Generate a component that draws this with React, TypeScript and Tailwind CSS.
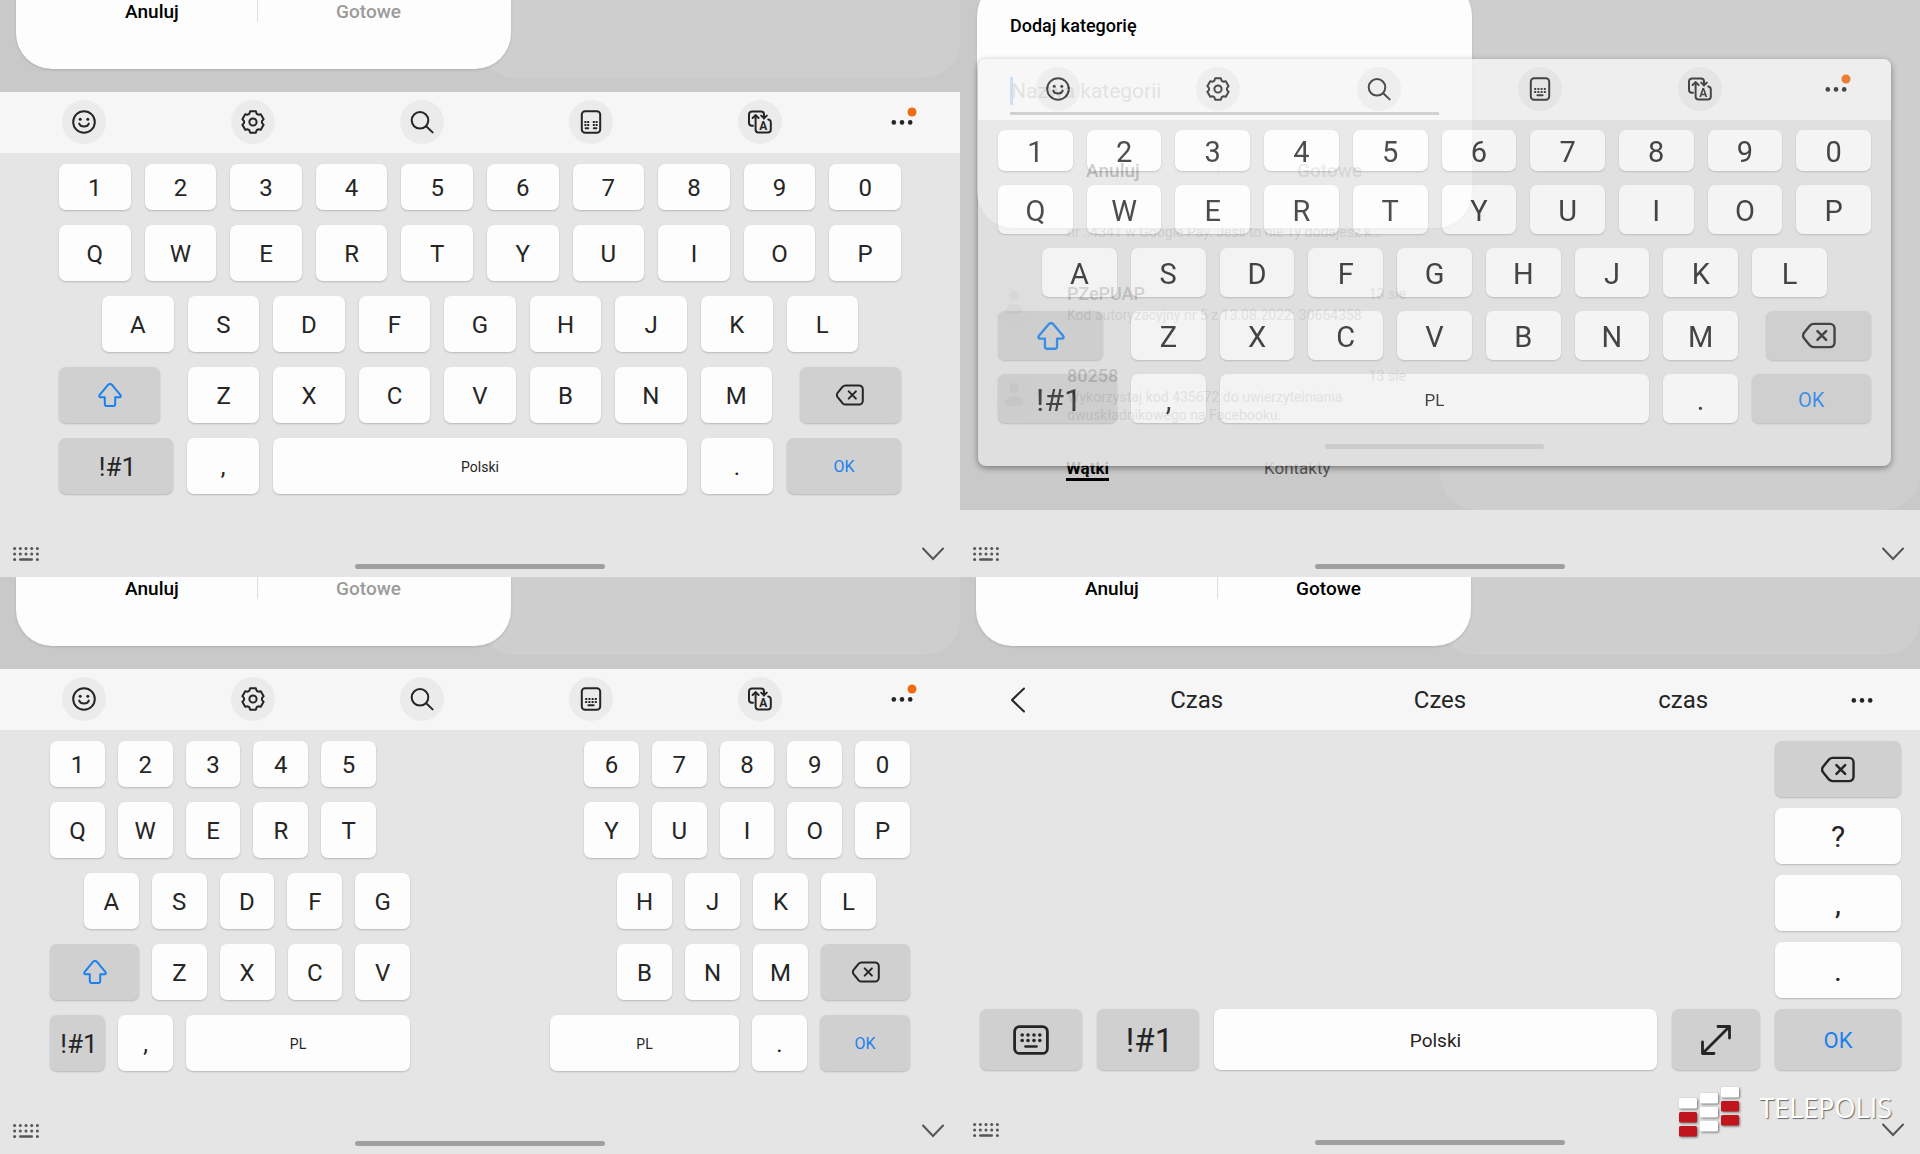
import type { ReactNode } from "react";
import clsx from "clsx";

const GEAR_POINTS = Array.from({ length: 6 })
  .flatMap((_, i) =>
    [
      [-24, 9],
      [-15, 11],
      [15, 11],
      [24, 9],
    ].map(([offset, radius]) => {
      const angle = ((i * 60 - 90 + offset) * Math.PI) / 180;
      return `${(radius * Math.cos(angle)).toFixed(2)},${(radius * Math.sin(angle)).toFixed(2)}`;
    })
  )
  .join(" ");

const ToolIcon = ({ children }: { children: ReactNode }) => (
  <svg
    viewBox="-12 -12 24 24"
    className="w-6 h-6"
    fill="none"
    stroke="currentColor"
    strokeWidth="2"
    strokeLinecap="round"
    strokeLinejoin="round"
  >
    {children}
  </svg>
);

const SmileIcon = () => (
  <ToolIcon>
    <circle r="10.8" />
    <circle cx="-3.8" cy="-2.8" r="1.5" fill="currentColor" stroke="none" />
    <circle cx="3.8" cy="-2.8" r="1.5" fill="currentColor" stroke="none" />
    <path d="M-4.8 1.6A5 4 0 0 0 4.8 1.6" />
  </ToolIcon>
);

const GearIcon = () => (
  <ToolIcon>
    <polygon points={GEAR_POINTS} />
    <circle r="3.6" />
  </ToolIcon>
);

const SearchIcon = () => (
  <ToolIcon>
    <circle cx="-2" cy="-1.7" r="8.3" />
    <path d="M4.2 4.2L10.6 10.4" />
  </ToolIcon>
);

const ModeIcon = ({ split }: { split?: boolean }) => {
  const columns = split ? [-5.6, -2.8, 2.8, 5.6] : [-4.8, -1.6, 1.6, 4.8];
  return (
    <ToolIcon>
      <rect x="-9.2" y="-10.8" width="18.4" height="21.6" rx="3.4" />
      {columns.map((x) => (
        <g key={x} fill="currentColor" stroke="none">
          <rect x={x - 1} y="-1" width="2" height="2" />
          <rect x={x - 1} y="2" width="2" height="2" />
        </g>
      ))}
      {split ? <path d="M-5.4 6.2H-2.8M2.8 6.2H5.4" /> : <path d="M-2.6 6.2H2.6" />}
    </ToolIcon>
  );
};

const TranslateIcon = () => (
  <ToolIcon>
    <path d="M-7 3.8H-8a3 3 0 0 1-3-3V-7.6a3 3 0 0 1 3-3H1a3 3 0 0 1 3 3V-3.6" />
    <path d="M-4.4-6.6V7.6a3 3 0 0 0 3 3H7.8a3 3 0 0 0 3-3V.4a3 3 0 0 0-2.6-3" />
    <path d="M-7.4-4L-4.4-6.9L-1.4-4" />
    <path d="M1.2-6.4L4-3.6L6.8-6.4" />
    <text
      x="3.2"
      y="8"
      textAnchor="middle"
      fontSize="12"
      fontWeight="700"
      fill="currentColor"
      stroke="none"
    >
      A
    </text>
  </ToolIcon>
);

const DotsIcon = ({ badge }: { badge?: boolean }) => (
  <svg viewBox="-12 -12 24 24" className="w-6 h-6 overflow-visible" fill="currentColor">
    <circle cx="-8.2" cy="0.4" r="2.3" />
    <circle cx="0" cy="0.4" r="2.3" />
    <circle cx="8.2" cy="0.4" r="2.3" />
    {badge && <circle cx="10" cy="-10" r="4.5" fill="#f26a12" />}
  </svg>
);

const BackspaceIcon = ({ className }: { className: string }) => (
  <svg
    viewBox="-14 -11 28 22"
    className={className}
    fill="none"
    stroke="currentColor"
    strokeWidth="2"
    strokeLinecap="round"
    strokeLinejoin="round"
  >
    <path d="M-4.4-9.6H9a3.8 3.8 0 0 1 3.8 3.8V5.8A3.8 3.8 0 0 1 9 9.6H-4.4a4 4 0 0 1-2.9-1.2L-12 2.6a3.6 3.6 0 0 1 0-5.2L-7.3-8.4a4 4 0 0 1 2.9-1.2z" />
    <path d="M-1.3-3.6L5.9 3.6M5.9-3.6L-1.3 3.6" />
  </svg>
);

const ShiftIcon = ({ className }: { className: string }) => (
  <svg
    viewBox="-12 -12 24 24"
    className={className}
    fill="none"
    stroke="currentColor"
    strokeWidth="2"
    strokeLinejoin="round"
  >
    <path d="M-1.8-10.3a2.4 2.4 0 0 1 3.6 0L10.3-.2c1 1.3.4 2.4-.9 2.4H5.200V9.3a1.6 1.6 0 0 1-1.6 1.6H-3.6A1.6 1.6 0 0 1-5.200 9.3V2.2H-9.4c-1.3 0-1.9-1.1-.9-2.4z" />
  </svg>
);

const KeyboardIcon = () => (
  <svg
    viewBox="0 0 36 30"
    className="w-9 h-[30px]"
    fill="none"
    stroke="currentColor"
    strokeWidth="2.8"
    strokeLinecap="round"
  >
    <rect x="1.6" y="1.6" width="32.8" height="26.8" rx="5" />
    {[9.2, 15, 21, 26.8].map((x) => (
      <g key={x} fill="currentColor" stroke="none">
        <circle cx={x} cy="10" r="1.8" />
        <circle cx={x} cy="15.5" r="1.8" />
      </g>
    ))}
    <path d="M12.5 21.5H23.5" strokeWidth="2.6" />
  </svg>
);

const ExpandIcon = () => (
  <svg
    viewBox="0 0 32 32"
    className="w-8 h-8"
    fill="none"
    stroke="currentColor"
    strokeWidth="2.8"
    strokeLinecap="round"
    strokeLinejoin="round"
  >
    <path d="M2.5 29.5L29.5 2.5M18 2.5H29.5V14M2.5 18V29.5H14" />
  </svg>
);

const AnswerButtons = ({ ready }: { ready?: boolean }) => (
  <div className="flex flex-row pl-[31px] pr-8 text-[19px] leading-6 font-medium">
    <button className="w-[210px] text-black">Anuluj</button>
    <div className="w-px h-[22px] bg-[#dedede]"></div>
    <button className={clsx("flex-1", ready ? "text-black" : "text-[#9b9b9b]")}>
      Gotowe
    </button>
  </div>
);

// Bottom edge of the dialog that stays visible above the docked keyboard
const DialogEdge = ({ ready }: { ready?: boolean }) => (
  <div className="relative h-[92px] bg-[#c9c9c9] overflow-hidden">
    <div className="absolute top-0 right-0 w-1/2 h-[78px] bg-[#cecece] rounded-b-[36px]"></div>
    <div className="relative w-[495px] h-[69px] ml-4 bg-[#fdfdfd] rounded-b-[36px] shadow-sm">
      <AnswerButtons ready={ready} />
    </div>
  </div>
);

const ToolButton = ({ label, children }: { label: string; children: ReactNode }) => (
  <button
    aria-label={label}
    className="flex justify-center items-center justify-self-center w-11 h-11 rounded-full bg-[#ebebeb]"
  >
    {children}
  </button>
);

const Toolbar = ({ split }: { split?: boolean }) => (
  <div className="grid grid-cols-[168fr_169fr_169fr_169fr_169fr_116fr] items-center h-[61px] pb-px bg-[#f6f6f6]">
    <ToolButton label="Emotikony">
      <SmileIcon />
    </ToolButton>
    <ToolButton label="Ustawienia">
      <GearIcon />
    </ToolButton>
    <ToolButton label="Szukaj">
      <SearchIcon />
    </ToolButton>
    <ToolButton label="Tryb klawiatury">
      <ModeIcon split={split} />
    </ToolButton>
    <ToolButton label="Tłumacz">
      <TranslateIcon />
    </ToolButton>
    <button aria-label="Więcej" className="justify-self-center">
      <DotsIcon badge />
    </button>
  </div>
);

type KeyProps = {
  children: ReactNode;
  className?: string;
  dark?: boolean;
  label?: string;
};

const Key = ({ children, className = "flex-1", dark, label }: KeyProps) => (
  <button
    aria-label={label}
    className={clsx(
      "flex justify-center items-center min-w-0 rounded-[7px] shadow-[0_1px_2px_rgba(0,0,0,0.2)]",
      typeof children === "string" && "pt-[2px]",
      dark ? "bg-[#d0d0d0]" : "bg-[#fdfdfd]",
      className
    )}
  >
    {children}
  </button>
);

const Keys = ({ chars }: { chars: string }) => (
  <>
    {chars.split("").map((char) => (
      <Key key={char}>{char}</Key>
    ))}
  </>
);

const NavBar = () => (
  <div className="grid grid-cols-[1fr_250px_1fr] items-end h-[67px] text-[#555]">
    <button aria-label="Wybierz klawiaturę" className="justify-self-start pl-[13px] pb-4">
      <svg viewBox="0 0 26 14" className="w-[26px] h-[14px]" fill="currentColor">
        {[1.6, 7.3, 13, 18.7, 24.4].map((x) => (
          <g key={x}>
            <circle cx={x} cy="1.5" r="1.5" />
            <circle cx={x} cy="7" r="1.5" />
          </g>
        ))}
        <circle cx="1.6" cy="12.5" r="1.5" />
        <circle cx="24.4" cy="12.5" r="1.5" />
        <rect x="6" y="11.2" width="14" height="2.6" rx="1.3" />
      </svg>
    </button>
    <div className="h-[5px] mb-2 rounded-full bg-[#a0a0a0]"></div>
    <button aria-label="Ukryj klawiaturę" className="justify-self-end pr-4 pb-4">
      <svg
        viewBox="0 0 22 14"
        className="w-[22px] h-[14px]"
        fill="none"
        stroke="currentColor"
        strokeWidth="2"
        strokeLinecap="round"
      >
        <path d="M1 1.5L11 12L21 1.5" />
      </svg>
    </button>
  </div>
);

const StandardKeyboard = () => (
  <section className="bg-[#e5e5e5]">
    <DialogEdge />
    <Toolbar split />
    <div className="flex flex-col gap-[15px] px-[59px] pt-[11px] pb-4 text-[24px] leading-7">
      <div className="flex flex-row gap-[14px] h-[46px]">
        <Keys chars="1234567890" />
      </div>
      <div className="flex flex-row gap-[14px] h-14">
        <Keys chars="QWERTYUIOP" />
      </div>
      <div className="flex flex-row gap-[14px] h-14 px-[43px]">
        <Keys chars="ASDFGHJKL" />
      </div>
      <div className="flex flex-row gap-[14px] h-14">
        <Key dark label="Shift" className="w-[101px] mr-[14px] text-[#1a80ee]">
          <ShiftIcon className="w-6 h-6" />
        </Key>
        <Keys chars="ZXCVBNM" />
        <Key dark label="Usuń" className="w-[101px] ml-[14px]">
          <BackspaceIcon className="w-7 h-[22px]" />
        </Key>
      </div>
      <div className="flex flex-row gap-[14px] h-14">
        <Key dark className="w-[114px] pl-[3px] text-[26px]">!#1</Key>
        <Key className="w-[72px]">,</Key>
        <Key className="flex-1 text-[14px]">Polski</Key>
        <Key className="w-[72px]">.</Key>
        <Key dark className="w-[114px] text-[16px] text-[#1a80ee]">OK</Key>
      </div>
    </div>
    <NavBar />
  </section>
);

const SplitKeyboard = () => (
  <section className="bg-[#e5e5e5]">
    <DialogEdge />
    <Toolbar />
    <div className="grid grid-cols-[360fr_140fr_360fr] px-[50px] pt-[11px] pb-4 text-[24px] leading-7">
      <div className="flex flex-col gap-[15px]">
        <div className="flex flex-row gap-[13px] h-[46px] pr-[34px]">
          <Keys chars="12345" />
        </div>
        <div className="flex flex-row gap-[13px] h-14 pr-[34px]">
          <Keys chars="QWERT" />
        </div>
        <div className="flex flex-row gap-[13px] h-14 pl-[34px]">
          <Keys chars="ASDFG" />
        </div>
        <div className="flex flex-row gap-[13px] h-14">
          <Key dark label="Shift" className="w-[89px] text-[#1a80ee]">
            <ShiftIcon className="w-6 h-6" />
          </Key>
          <Keys chars="ZXCV" />
        </div>
        <div className="flex flex-row gap-[13px] h-14">
          <Key dark className="w-[55px] pl-[3px] text-[26px]">!#1</Key>
          <Key className="w-[55px]">,</Key>
          <Key className="flex-1 text-[14px]">PL</Key>
        </div>
      </div>
      <div className="flex flex-col gap-[15px] col-start-3">
        <div className="flex flex-row gap-[13px] h-[46px] pl-[34px]">
          <Keys chars="67890" />
        </div>
        <div className="flex flex-row gap-[13px] h-14 pl-[34px]">
          <Keys chars="YUIOP" />
        </div>
        <div className="flex flex-row gap-[13px] h-14 pl-[67px] pr-[34px]">
          <Keys chars="HJKL" />
        </div>
        <div className="flex flex-row gap-[13px] h-14 pl-[67px]">
          <Keys chars="BNM" />
          <Key dark label="Usuń" className="w-[89px]">
            <BackspaceIcon className="w-7 h-[22px]" />
          </Key>
        </div>
        <div className="flex flex-row gap-[13px] h-14">
          <Key className="flex-1 text-[14px]">PL</Key>
          <Key className="w-[55px]">.</Key>
          <Key dark className="w-[90px] text-[16px] text-[#1a80ee]">OK</Key>
        </div>
      </div>
    </div>
    <NavBar />
  </section>
);

const Avatar = () => (
  <div className="flex justify-center items-center w-12 h-12 ml-[30px] mr-[29px] rounded-full bg-[#c3c3c3]">
    <svg viewBox="0 0 18 26" className="w-[18px] h-[26px]" fill="#9c9c9c">
      <circle cx="9" cy="6" r="5" />
      <path d="M0 22c0-5 4-8 9-8s9 3 9 8c-3 3-15 3-18 0z" />
    </svg>
  </div>
);

const messages = [
  {
    sender: "PZePUAP",
    date: "13 sie",
    lines: ["Kod autoryzacyjny nr 5 z 13.08.2022: 30664358"],
  },
  {
    sender: "80258",
    date: "13 sie",
    lines: ["Wykorzystaj kod 435672 do uwierzytelniania", "dwuskładnikowego na Facebooku."],
  },
];

const MessageList = () => (
  <div className="flex flex-col gap-[38px] w-1/2 pt-[223px] text-[14px] leading-[18px] text-[#666]">
    <p className="pl-[107px] whitespace-nowrap">
      nr ..4341 w Google Pay. Jeśli to nie Ty dodajesz k...
    </p>
    {messages.map((message) => (
      <div key={message.sender} className="flex flex-row items-center">
        <Avatar />
        <div className="flex-1 pr-[34px]">
          <div className="flex flex-row justify-between items-center mb-px">
            <p className="text-[18px] leading-[22px] font-medium text-[#111]">{message.sender}</p>
            <p>{message.date}</p>
          </div>
          {message.lines.map((line) => (
            <p key={line} className="whitespace-nowrap">{line}</p>
          ))}
        </div>
      </div>
    ))}
    <div className="flex flex-row gap-[155px] -mt-1 pl-[106px] text-[17px] leading-5">
      <button className="border-b-3 border-black font-bold text-black">Wątki</button>
      <button className="self-start text-[#555]">Kontakty</button>
    </div>
  </div>
);

const FloatingKeyboard = () => (
  <section className="flex flex-col bg-[#e5e5e5]">
    <div className="relative h-[510px] bg-[#c9c9c9] overflow-hidden">
      <div className="absolute top-0 right-0 w-1/2 h-full bg-[#cecece] rounded-b-[36px]"></div>
      <MessageList />

      <div className="absolute -top-5 left-[17px] w-[495px] h-[248px] pt-[34px] bg-[#fdfdfd] rounded-[36px] shadow-sm">
        <h2 className="px-[33px] text-[18px] leading-6 font-medium text-black">Dodaj kategorię</h2>
        <div className="mx-[33px] mt-8 mb-11 border-b-3 border-[#333]">
          <div className="flex items-center h-[42px]">
            <span className="w-[3px] h-7 bg-[#1a80ee]"></span>
            <input
              aria-label="Nazwa kategorii"
              placeholder="Nazwa kategorii"
              className="w-full -ml-[2px] text-[21px] leading-7 outline-none placeholder:text-[#8f8f8f]"
            />
          </div>
        </div>
        <AnswerButtons />
      </div>

      <div className="absolute top-[59px] left-[18px] right-[29px] rounded-lg overflow-hidden bg-[#e5e5e5] opacity-[81%] shadow-[0_2px_6px_rgba(0,0,0,0.5)]">
        <Toolbar />
        <div className="flex flex-col gap-[14px] px-5 pt-[10px] pb-[17px] text-[29px] leading-8">
          <div className="flex flex-row gap-[14px] h-[41px]">
            <Keys chars="1234567890" />
          </div>
          <div className="flex flex-row gap-[14px] h-[49px]">
            <Keys chars="QWERTYUIOP" />
          </div>
          <div className="flex flex-row gap-[14px] h-[49px] px-[44px]">
            <Keys chars="ASDFGHJKL" />
          </div>
          <div className="flex flex-row gap-[14px] h-[49px]">
            <Key dark label="Shift" className="w-[105px] mr-[14px] text-[#1a80ee]">
              <ShiftIcon className="w-7 h-7" />
            </Key>
            <Keys chars="ZXCVBNM" />
            <Key dark label="Usuń" className="w-[105px] ml-[14px]">
              <BackspaceIcon className="w-[34px] h-[27px]" />
            </Key>
          </div>
          <div className="flex flex-row gap-[14px] h-[49px]">
            <Key dark className="w-[119px] pl-[3px] text-[32px]">!#1</Key>
            <Key className="w-[75px]">,</Key>
            <Key className="flex-1 text-[17px]">PL</Key>
            <Key className="w-[75px]">.</Key>
            <Key dark className="w-[119px] text-[20px] text-[#1a80ee]">OK</Key>
          </div>
          <div className="self-center w-[219px] h-[5px] mt-[7px] rounded-full bg-[#ccc]"></div>
        </div>
      </div>
    </div>
    <NavBar />
  </section>
);

const Logo = () => (
  <div className="absolute right-7 bottom-[17px] flex flex-row items-center gap-[19px]">
    <svg
      viewBox="0 0 61 50"
      className="w-[61px] h-[50px] drop-shadow-[1px_1px_1px_rgba(0,0,0,0.5)]"
    >
      {[
        { x: 0, y: 11, fills: ["#fff", "#c0151c", "#c0151c"] },
        { x: 21, y: 6, fills: ["#fff", "#fff", "#fff"] },
        { x: 42, y: 0, fills: ["#fff", "#c0151c", "#c0151c"] },
      ].map((column) =>
        column.fills.map((fill, i) => (
          <rect
            key={`${column.x}-${i}`}
            x={column.x}
            y={column.y + i * 14}
            width="18"
            height="10.5"
            rx="1.5"
            fill={fill}
          />
        ))
      )}
    </svg>
    <p className="pb-2 font-['Open_Sans',sans-serif] text-[27px] leading-8 font-medium text-white [text-shadow:1px_1px_1px_rgba(0,0,0,0.55)]">
      TELEPOLIS
    </p>
  </div>
);

const HandwritingKeyboard = () => (
  <section className="relative bg-[#e5e5e5]">
    <DialogEdge ready />
    <div className="grid grid-cols-[115fr_243fr_243fr_243fr_115fr] justify-items-center items-center h-[61px] bg-[#f6f6f6] text-[24px] leading-7">
      <button aria-label="Wstecz">
        <svg
          viewBox="0 0 16 26"
          className="w-4 h-[26px]"
          fill="none"
          stroke="currentColor"
          strokeWidth="2"
          strokeLinecap="round"
          strokeLinejoin="round"
        >
          <path d="M14 1.5L2 13L14 24.5" />
        </svg>
      </button>
      <button>Czas</button>
      <button>Czes</button>
      <button>czas</button>
      <button aria-label="Więcej">
        <DotsIcon />
      </button>
    </div>
    <div className="flex flex-row items-end gap-[15px] pl-5 pr-[19px] pt-[11px] pb-4 leading-8">
      <div className="flex flex-row flex-1 gap-[15px] h-[61px]">
        <Key dark label="Klawiatura" className="w-[102px]">
          <KeyboardIcon />
        </Key>
        <Key dark className="w-[102px] pl-[3px] text-[33px]">!#1</Key>
        <Key className="flex-1 text-[19px]">Polski</Key>
        <Key dark label="Pełny ekran" className="w-[88px]">
          <ExpandIcon />
        </Key>
      </div>
      <div className="flex flex-col gap-[11px] w-[126px] text-[30px]">
        <Key dark label="Usuń" className="h-14">
          <BackspaceIcon className="w-[34px] h-[27px]" />
        </Key>
        <Key className="h-14">?</Key>
        <Key className="h-14">,</Key>
        <Key className="h-14">.</Key>
        <Key dark className="h-[61px] text-[22px] text-[#1a80ee]">OK</Key>
      </div>
    </div>
    <NavBar />
    <Logo />
  </section>
);

const App = () => {
  return (
    <main className="grid grid-cols-2 font-['Roboto',sans-serif] text-[#252525]">
      <StandardKeyboard />
      <FloatingKeyboard />
      <SplitKeyboard />
      <HandwritingKeyboard />
    </main>
  );
};

export default App;
